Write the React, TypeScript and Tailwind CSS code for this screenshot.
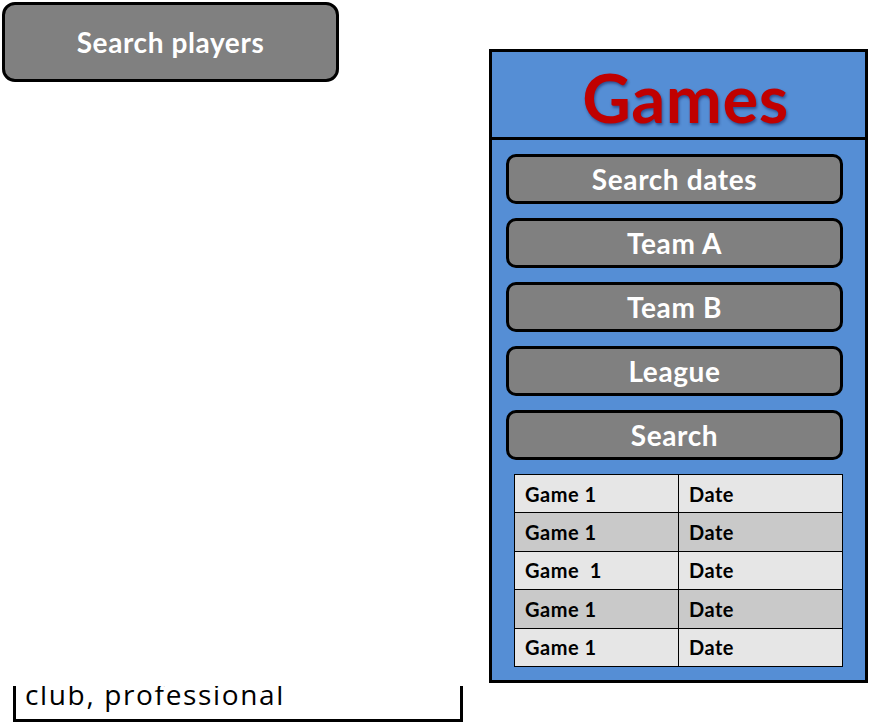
import React from 'react';

const FILTERS = ['Search dates', 'Team A', 'Team B', 'League', 'Search'];

const GAMES = [
  { name: 'Game 1', date: 'Date' },
  { name: 'Game 1', date: 'Date' },
  { name: 'Game\u00a0 1', date: 'Date' },
  { name: 'Game 1', date: 'Date' },
  { name: 'Game 1', date: 'Date' },
];

const SANS = "font-['Lato','Open_Sans',sans-serif]";

export default function App() {
  return (
    <div className={`flex h-[725px] w-[894px] overflow-hidden bg-white ${SANS}`}>
      {/* Left column: player search and the clipped description box */}
      <div className="flex w-[489px] flex-col justify-between">
        <div className="ml-[2px] mt-[2px] flex h-[80px] w-[337px] items-center justify-center rounded-[13px] border-[3px] border-black bg-[#808080]">
          <span className="text-[28px] font-bold tracking-[0.6px] text-white">Search players</span>
        </div>

        <div className="mb-[3px] ml-[13px] h-[36px] w-[450px] overflow-hidden border-x-[3px] border-b-[3px] border-black">
          <p className="-mt-[6px] ml-[9px] font-['Open_Sans',sans-serif] text-[28px] leading-[28px] tracking-[1.65px] text-black">
            club, professional
          </p>
        </div>
      </div>

      {/* Games panel */}
      <div className="mt-[49px] flex h-[634px] w-[379px] flex-col border-[3px] border-black bg-[#558ed5]">
        <div className="flex h-[88px] items-center justify-center border-b-[3px] border-black pl-[14px] pt-[6px]">
          <h1 className="text-[67px] font-bold leading-none tracking-[0.5px] text-[#c00000] [text-shadow:1px_2px_3px_rgba(0,0,60,0.45)]">
            Games
          </h1>
        </div>

        <div className="flex flex-col gap-[14px] pl-[14px] pt-[14px]">
          {FILTERS.map((label) => (
            <div
              key={label}
              className="flex h-[50px] w-[337px] items-center justify-center rounded-[10px] border-[3px] border-black bg-[#808080]"
            >
              <span className="text-[28px] font-bold tracking-[0.6px] text-white">{label}</span>
            </div>
          ))}
        </div>

        <table className="ml-[22px] mt-[14px] w-[329px] border-collapse">
          <tbody>
            {GAMES.map((g, idx) => (
              <tr key={idx} className={idx % 2 === 1 ? 'bg-[#c9c9c9]' : 'bg-[#e6e6e6]'}>
                <td className="h-[38.4px] w-[164px] border border-black pl-[10px] text-[20px] font-bold tracking-[0.5px] text-black">
                  {g.name}
                </td>
                <td className="h-[38.4px] border border-black pl-[10px] text-[20px] font-bold tracking-[0.5px] text-black">
                  {g.date}
                </td>
              </tr>
            ))}
          </tbody>
        </table>
      </div>
    </div>
  );
}
